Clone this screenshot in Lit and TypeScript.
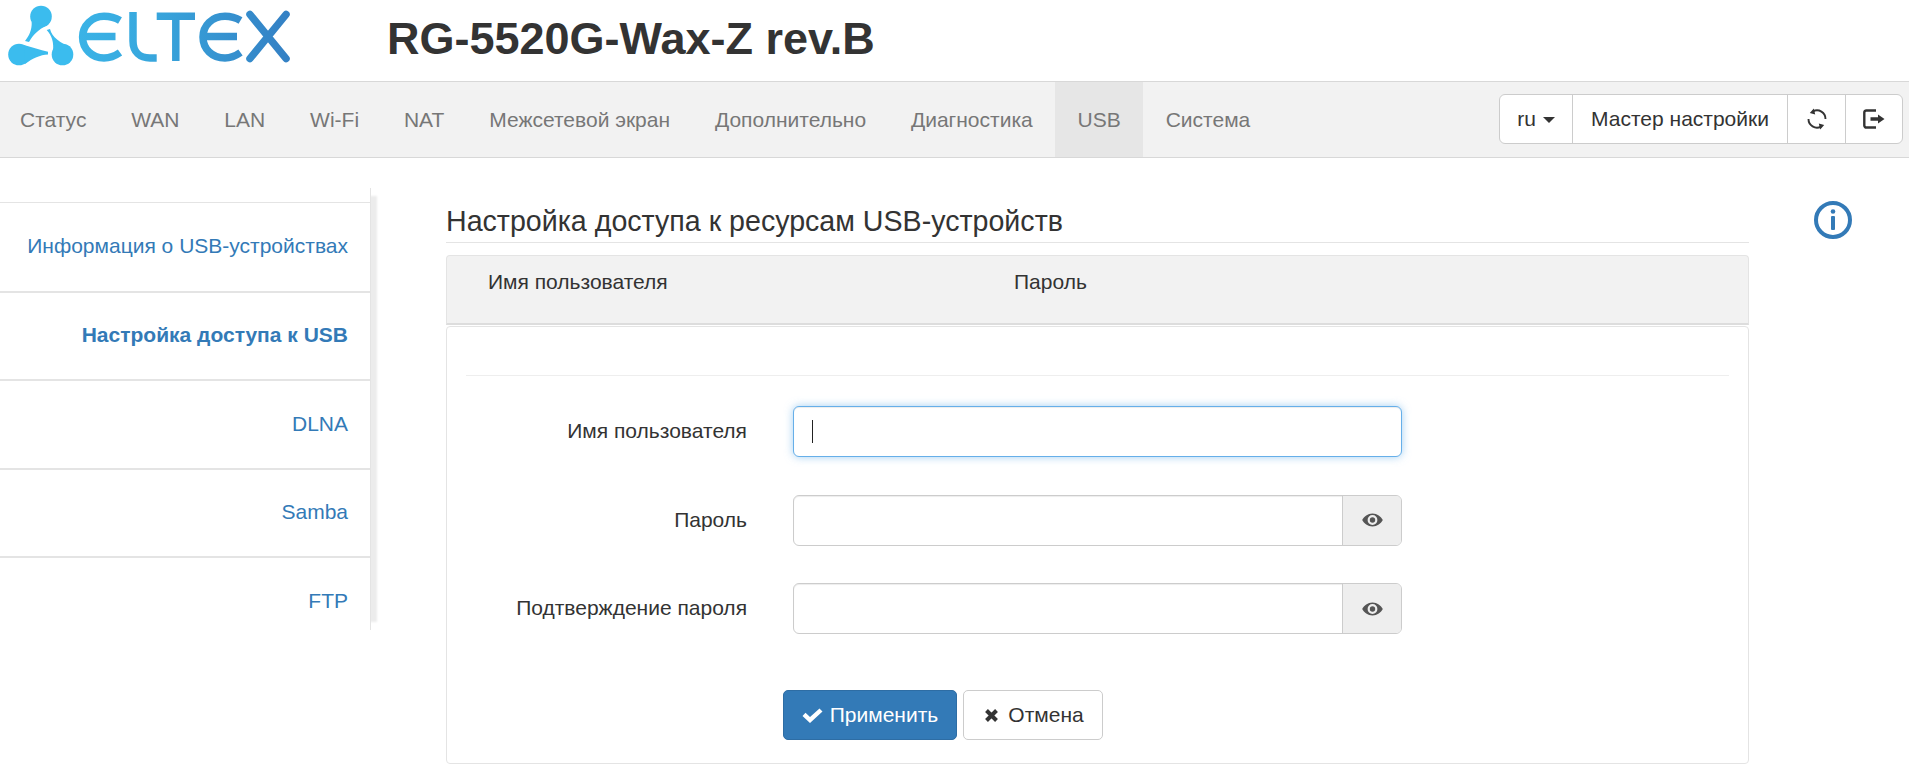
import { LitElement, html, css, svg } from "lit";
import { customElement } from "lit/decorators.js";

const eye = html`<svg class="eye" viewBox="0 0 21 14" width="21" height="14"><path fill="#555" fill-rule="evenodd" d="M10.500 0.500C5.800 0.500 2 3.500 0.200 7 2 10.500 5.800 13.500 10.500 13.500s8.500-3 10.300-6.500C19 3.500 15.200 0.500 10.500 0.500zM10.500 11.900A4.900 4.900 0 1 1 10.500 2.100a4.900 4.900 0 0 1 0 9.800z"/><circle cx="10.500" cy="7" r="2.700" fill="#555"/></svg>`;

const logo = svg`
<defs>
  <linearGradient id="lg" x1="0" x2="290" y1="0" y2="0" gradientUnits="userSpaceOnUse">
    <stop offset="0" stop-color="#3cc0f0"/><stop offset="0.5" stop-color="#38a8de"/><stop offset="1" stop-color="#3480c4"/>
  </linearGradient>
</defs>
<g fill="#3bbcee">
  <circle cx="41" cy="16.500" r="10.800"/><circle cx="19" cy="54.500" r="10.800"/><circle cx="62.500" cy="54.500" r="10.800"/>
  <path d="M31.700 22C32 30 29 36 25 41L29 42C33 35 38 30 47 25z"/>
  <path d="M24 45C32 47 40 50 48 51.700L48 54.500C40 55 33 58 25 64z"/>
  <path d="M50 29C52 37 60 43 71 47L53 52C54 42 52 36 46.700 30z"/>
</g>
<g fill="none" stroke="url(#lg)" stroke-width="7.500">
  <path d="M120 20.500C115 17.500 109 16.300 104 16.300C92 16.300 82.600 25.500 82.600 37C82.600 49 92 58 104 58C109 58 115 56 120 52.500"/>
  <path d="M82 36.500H115.500"/>
  <path d="M133 12V41C133 52 140 58 150 58H156.700"/>
  <path d="M156.700 16.300H195"/>
  <path d="M175.800 16V61"/>
  <path d="M240.500 20.500C235.500 17.500 230 16.300 225 16.300C212 16.300 203 25.500 203 37C203 49 212 58 225 58C230 58 235.500 56 240.500 52.500"/>
  <path d="M203 36.500H237"/>
  <path d="M250 14.500L286 58.500M286 14.500L250 58.500" stroke-linecap="round"/>
</g>`;

@customElement("app-root")
export class AppRoot extends LitElement {
  static styles = css`
    :host { display: block; font-family: "Liberation Sans", Arial, sans-serif; font-size: 21px; color: #333; background: #fff; height: 771px; overflow: hidden; }
    .top { height: 81px; display: flex; align-items: flex-start; }
    .logo { width: 300px; height: 70px; display: block; flex: none; }
    h1 { margin: 14px 0 0 87px; font-size: 45px; line-height: 50px; font-weight: 700; color: #333; }
    .nav { height: 75px; background: #f2f2f2; border-top: 1px solid #d8d8d8; border-bottom: 1px solid #d8d8d8; display: flex; justify-content: space-between; }
    .tabs { display: flex; }
    .tab { padding: 0 22.45px; display: flex; align-items: center; color: #777; }
    .tab:first-child { padding-left: 20px; }
    .tab.on { background: #e6e6e6; }
    .group { display: flex; height: 50px; margin: 12px 6px 0 0; background: #fff; border: 1px solid #ccc; border-radius: 6px; box-sizing: border-box; }
    .group > div { display: flex; align-items: center; justify-content: center; border-left: 1px solid #ccc; box-sizing: border-box; }
    .group > div:first-child { border-left: 0; }
    .lang { width: 72px; gap: 7px; }
    .caret { width: 0; height: 0; border-left: 6px solid transparent; border-right: 6px solid transparent; border-top: 6px solid #333; margin-top: 2px; }
    .wizard { width: 215px; }
    .ic { width: 58px; }
    .ic2 { width: 57px; }
    .body { display: flex; align-items: flex-start; }
    .side { width: 371px; margin-top: 30px; height: 442px; box-sizing: border-box; padding-top: 14px; flex: none; border-right: 1px solid #e4e4e4; box-shadow: 14px 0 2px -8px #ececec; }
    .side a { display: flex; align-items: center; justify-content: flex-end; height: 88.5px; padding: 0 22px 1px 0; box-sizing: border-box; color: #337ab7; border-top: 2px solid #e4e4e4; }
    .side a:first-child { border-top-width: 1px; }
    .side a.on { font-weight: 700; }
    .main { width: 1303px; margin-left: 75px; padding-top: 46px; flex: none; }
    h2 { margin: 0; font-size: 28.6px; font-weight: 400; line-height: 34px; padding-bottom: 4px; border-bottom: 1px solid #e4e4e4; color: #333; }
    .thead { margin-top: 12px; height: 70px; box-sizing: border-box; display: flex; background: #f2f2f2; border: 1px solid #e4e4e4; border-bottom: 2px solid #ddd; border-radius: 4px 4px 0 0; padding-top: 14px; line-height: 24px; }
    .thead span:first-child { width: 567px; padding-left: 41px; box-sizing: border-box; }
    .panel { height: 438px; box-sizing: border-box; margin-top: 1px; border: 1px solid #e4e4e4; border-radius: 4px; padding: 48px 19px 0; }
    .sep { border-top: 1px solid #eee; margin-bottom: 30px; }
    .row { display: flex; align-items: center; height: 51px; margin-bottom: 37.5px; }
    .row label { width: 281px; text-align: right; margin-right: 46px; flex: none; white-space: nowrap; padding-bottom: 1px; }
    .field { width: 609px; height: 51px; box-sizing: border-box; display: flex; border: 1px solid #ccc; border-radius: 6px; background: #fff; box-shadow: inset 0 1px 1px rgba(0,0,0,.075); }
    .field.focus { border-color: #66afe9; box-shadow: inset 0 1px 1px rgba(0,0,0,.075), 0 0 8px rgba(102,175,233,.6); align-items: center; padding-left: 18px; }
    .cursor { width: 1px; height: 23px; background: #222; }
    .field .fill { flex: 1; }
    .addon { width: 58px; display: flex; align-items: center; justify-content: center; background: #eee; border-left: 1px solid #ccc; border-radius: 0 5px 5px 0; }
    .btns { display: flex; gap: 6px; margin: 56px 0 0 317px; }
    .btn { height: 50px; box-sizing: border-box; display: flex; align-items: center; justify-content: center; border-radius: 5px; border: 1px solid #ccc; gap: 7px; }
    .apply { width: 174px; background: #337ab7; border-color: #2e6da4; color: #fff; }
    .cancel { width: 140px; background: #fff; color: #333; gap: 9px; padding-left: 2px; }
    .info { margin: 43px 0 0 65px; flex: none; display: block; }
  `;

  render() {
    const tabs = ["Статус", "WAN", "LAN", "Wi-Fi", "NAT", "Межсетевой экран", "Дополнительно", "Диагностика", "USB", "Система"];
    const side = ["Информация о USB-устройствах", "Настройка доступа к USB", "DLNA", "Samba", "FTP"];
    return html`
      <div class="top">
        <svg class="logo" viewBox="0 0 300 70" role="img" aria-label="ELTEX">${logo}</svg>
        <h1>RG-5520G-Wax-Z rev.B</h1>
      </div>
      <div class="nav">
        <div class="tabs">${tabs.map((t) => html`<div class="tab ${t === "USB" ? "on" : ""}">${t}</div>`)}</div>
        <div class="group">
          <div class="lang">ru<span class="caret"></span></div>
          <div class="wizard">Мастер настройки</div>
          <div class="ic"><svg width="22" height="22" viewBox="0 0 22 22" fill="none"><path d="M7 3.400A8.500 8.500 0 0 1 19.500 11M15 18.600A8.500 8.500 0 0 1 2.500 11" stroke="#333" stroke-width="1.900"/><path d="M7.800 0.500L3.800 5 9.200 6.500zM14.200 21.500L18.200 17 12.800 15.500z" fill="#333"/></svg></div>
          <div class="ic2"><svg width="22" height="20" viewBox="0 0 22 20" fill="none"><path d="M13 1.500H3.500A2 2 0 0 0 1.300 3.500V16.500A2 2 0 0 0 3.500 18.500H13" stroke="#333" stroke-width="2.400"/><path d="M7.500 8.200H15V5.500L21.500 10 15 14.500V11.800H7.500z" fill="#333"/></svg></div>
        </div>
      </div>
      <div class="body">
        <div class="side">${side.map((s, i) => html`<a class="${i === 1 ? "on" : ""}">${s}</a>`)}</div>
        <div class="main">
          <h2>Настройка доступа к ресурсам USB-устройств</h2>
          <div class="thead"><span>Имя пользователя</span><span>Пароль</span></div>
          <div class="panel">
            <div class="sep"></div>
            <div class="row"><label>Имя пользователя</label><div class="field focus"><span class="cursor"></span></div></div>
            <div class="row"><label>Пароль</label><div class="field"><span class="fill"></span><span class="addon">${eye}</span></div></div>
            <div class="row"><label>Подтверждение пароля</label><div class="field"><span class="fill"></span><span class="addon">${eye}</span></div></div>
            <div class="btns">
              <div class="btn apply"><svg width="21" height="15" viewBox="0 0 21 15"><path d="M0.500 8L3.500 4.800 8 9 17.500 0.500 20.500 3.500 8 15z" fill="#fff"/></svg>Применить</div>
              <div class="btn cancel"><svg width="15" height="15" viewBox="0 0 15 15"><path d="M2.500 2.500L12.500 12.500M12.500 2.500L2.500 12.500" stroke="#333" stroke-width="4" stroke-linecap="butt"/></svg>Отмена</div>
            </div>
          </div>
        </div>
        <svg class="info" width="38" height="38" viewBox="0 0 38 38" fill="none"><circle cx="19" cy="19" r="17" stroke="#337ab7" stroke-width="4"/><circle cx="19" cy="10.500" r="2.300" fill="#337ab7"/><rect x="17" y="15" width="4" height="14" rx="1" fill="#337ab7"/></svg>
      </div>
    `;
  }
}
